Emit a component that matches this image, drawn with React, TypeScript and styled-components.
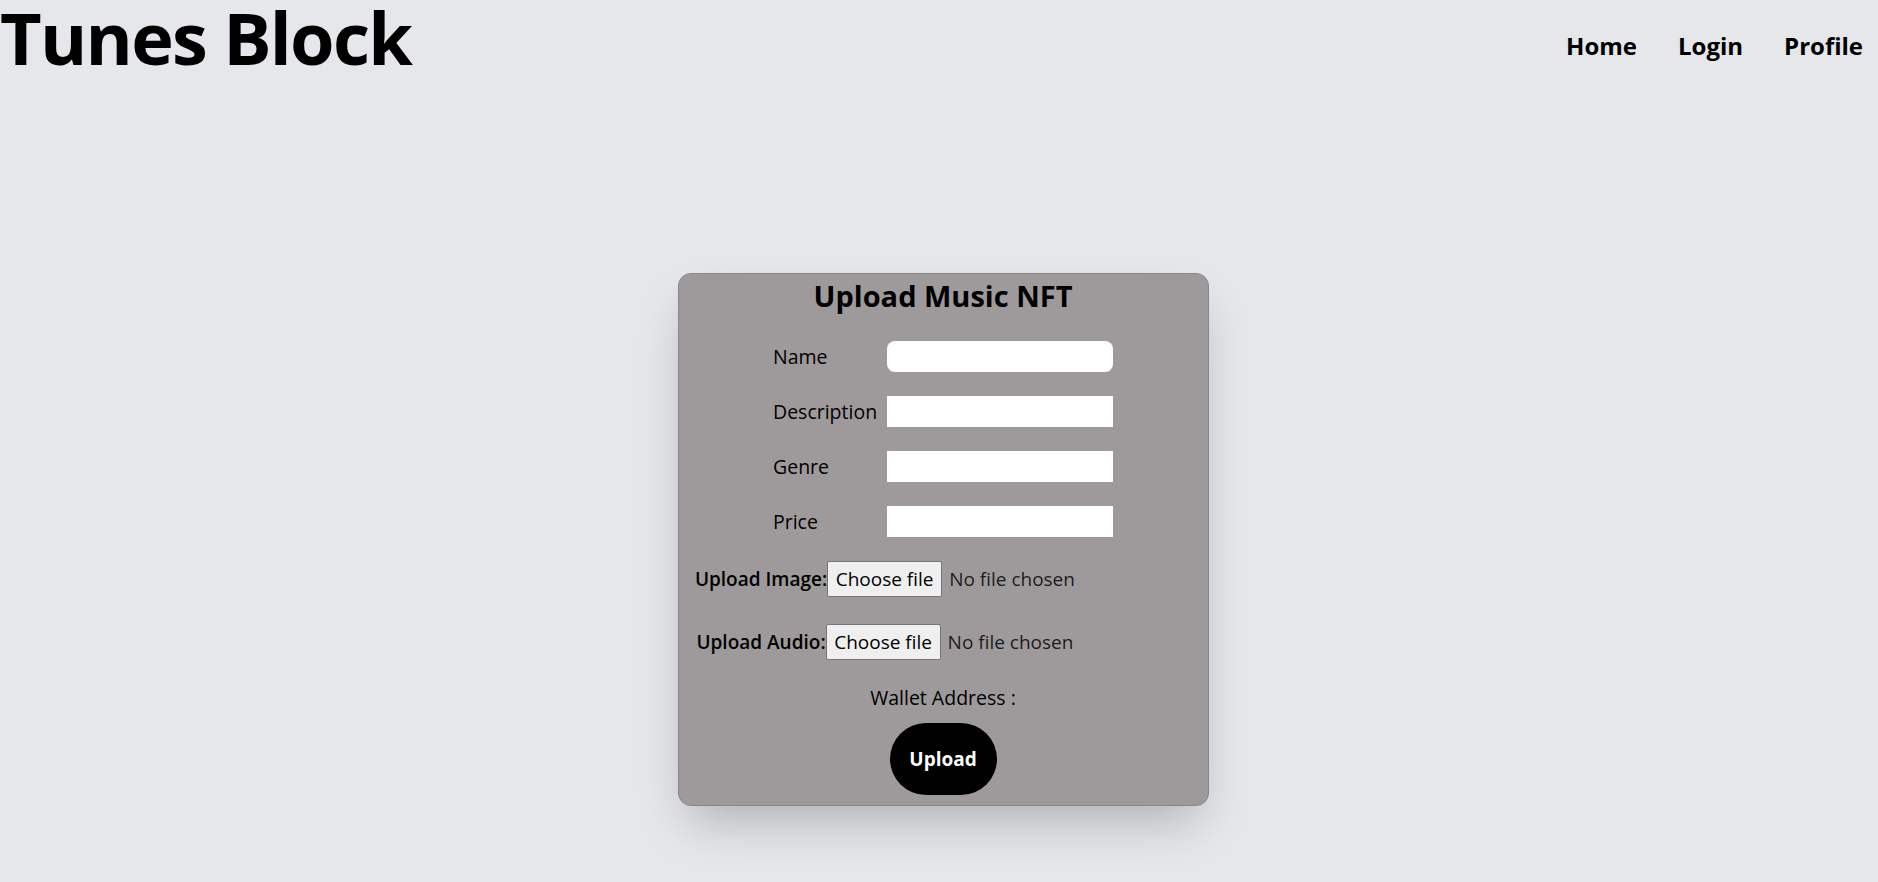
import React from "react";
import styled, { createGlobalStyle } from "styled-components";

const GlobalStyle = createGlobalStyle`
  html, body {
    margin: 0;
    padding: 0;
    background: #e5e7eb;
    font-family: "Segoe UI", "Open Sans", "Noto Sans", sans-serif;
    color: #000;
  }
  * { box-sizing: border-box; }
`;

const Page = styled.div`
  min-height: 882px;
  background: #e5e7eb;
`;

const Header = styled.header`
  display: flex;
  justify-content: space-between;
  align-items: flex-start;
  padding-top: 1px;
`;

const Brand = styled.h1`
  margin: 0;
  font-size: 72px;
  line-height: 72px;
  font-weight: 700;
  letter-spacing: -1.7px;
`;

const Nav = styled.nav`
  display: flex;
  gap: 41px;
  padding-top: 29px;
  padding-right: 15px;
`;

const NavLink = styled.a`
  font-size: 24px;
  line-height: 32px;
  font-weight: 700;
  color: #000;
  text-decoration: none;
  cursor: pointer;
`;

const Main = styled.main`
  display: flex;
  justify-content: center;
  padding: 200px 0 0 8px;
`;

const Card = styled.form`
  width: 531px;
  display: flex;
  flex-direction: column;
  align-items: center;
  padding: 4px 0 10px;
  background: #9e9a9b;
  border: 1px solid #8a8687;
  border-radius: 13px;
  box-shadow: 0 25px 50px -12px rgba(0, 0, 0, 0.25);
`;

const Title = styled.h2`
  margin: 0;
  font-size: 29px;
  line-height: 36px;
  font-weight: 700;
`;

const Fields = styled.div`
  margin-top: 27px;
  display: grid;
  grid-template-columns: 114px 226px;
  grid-auto-rows: 31px;
  row-gap: 24px;
  align-items: center;
`;

const FieldLabel = styled.label`
  font-size: 19.5px;
  line-height: 26px;
  font-weight: 500;
  color: #000;
  white-space: nowrap;
`;

const TextInput = styled.input<{ $rounded?: boolean }>`
  width: 226px;
  height: 31px;
  border: none;
  outline: none;
  background: #fff;
  border-radius: ${(p) => (p.$rounded ? "8px" : "0")};
  font: inherit;
  font-size: 16px;
  padding: 0 8px;
`;

const FileRows = styled.div`
  margin-top: 24px;
  display: flex;
  flex-direction: column;
  gap: 27px;
`;

const FileRow = styled.div`
  display: flex;
  align-items: center;
  justify-content: center;
  height: 36px;
`;

const FileLabel = styled.label`
  font-size: 19px;
  line-height: 26px;
  font-weight: 600;
  color: #000;
  white-space: nowrap;
`;

const FileBox = styled.div`
  width: 364px;
  display: flex;
  align-items: center;
  gap: 7px;
`;

const ChooseButton = styled.span`
  width: 115px;
  height: 36px;
  display: flex;
  align-items: center;
  justify-content: center;
  background: #efefef;
  border: 1px solid #767676;
  border-radius: 2px;
  font-size: 19px;
  color: #000;
`;

const NoFile = styled.span`
  font-size: 19px;
  color: #1c1c1c;
  white-space: nowrap;
`;

const HiddenFile = styled.input`
  display: none;
`;

const Wallet = styled.p`
  margin: 24px 0 0;
  font-size: 19.5px;
  line-height: 28px;
  font-weight: 500;
  color: #000;
`;

const UploadButton = styled.button`
  margin-top: 11px;
  width: 107px;
  height: 72px;
  border: none;
  border-radius: 36px;
  background: #000;
  color: #fff;
  font-family: inherit;
  font-size: 19px;
  font-weight: 700;
  cursor: pointer;
`;

const fields = [
  { label: "Name", rounded: true },
  { label: "Description" },
  { label: "Genre" },
  { label: "Price" },
];

const files = ["Upload Image:", "Upload Audio:"];

export default function App() {
  return (
    <Page>
      <GlobalStyle />
      <Header>
        <Brand>Tunes Block</Brand>
        <Nav>
          <NavLink>Home</NavLink>
          <NavLink>Login</NavLink>
          <NavLink>Profile</NavLink>
        </Nav>
      </Header>
      <Main>
        <Card onSubmit={(e) => e.preventDefault()}>
          <Title>Upload Music NFT</Title>
          <Fields>
            {fields.map((f) => (
              <React.Fragment key={f.label}>
                <FieldLabel>{f.label}</FieldLabel>
                <TextInput type="text" $rounded={f.rounded} />
              </React.Fragment>
            ))}
          </Fields>
          <FileRows>
            {files.map((l) => (
              <FileRow key={l}>
                <FileLabel>{l}</FileLabel>
                <FileBox as="label">
                  <HiddenFile type="file" />
                  <ChooseButton>Choose file</ChooseButton>
                  <NoFile>No file chosen</NoFile>
                </FileBox>
              </FileRow>
            ))}
          </FileRows>
          <Wallet>Wallet Address :</Wallet>
          <UploadButton type="submit">Upload</UploadButton>
        </Card>
      </Main>
    </Page>
  );
}
